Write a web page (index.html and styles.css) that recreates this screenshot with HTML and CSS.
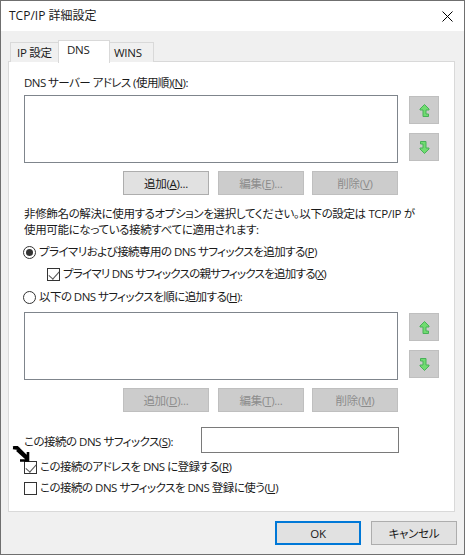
FILE: index.html
```html
<!DOCTYPE html>
<html lang="ja">
<head>
    <meta charset="UTF-8">
    <meta name="viewport" content="width=device-width, initial-scale=1.0">
    <title>TCP/IP 詳細設定</title>
    <link rel="stylesheet" href="styles.css">
</head>
<body>
    <svg width="0" height="0" class="defs">
        <symbol id="arrow-up" viewBox="0 0 11 13">
            <path d="M5.5 .5 L10 5 V6 H7 V10 H9.5 V12.5 H4 V6 H1 V5 Z" fill="#70dc70" stroke="#48b058" stroke-width="1"/>
        </symbol>
    </svg>
    <div class="window">
        <div class="titlebar">
            <span class="title">TCP/IP 詳細設定</span>
            <svg class="close" width="11" height="11" viewBox="0 0 11 11"><path d="M.5 .5 L10.5 10.5 M10.5 .5 L.5 10.5" stroke="#000" stroke-width="1" fill="none"/></svg>
        </div>
        <div class="content">
            <div class="tabs">
                <div class="tab">IP 設定</div>
                <div class="tab active">DNS</div>
                <div class="tab">WINS</div>
            </div>
            <div class="panel">
                <div class="label label-top">DNS サーバー アドレス (使用順)(<u>N</u>):</div>
                <div class="list-row">
                    <div class="listbox"></div>
                    <div class="arrows">
                        <div class="arrow-btn"><svg width="11" height="13"><use href="#arrow-up"/></svg></div>
                        <div class="arrow-btn"><svg class="flip" width="11" height="13"><use href="#arrow-up"/></svg></div>
                    </div>
                </div>
                <div class="btn-row">
                    <button class="btn">追加(<u>A</u>)...</button>
                    <button class="btn disabled">編集(<u>E</u>)...</button>
                    <button class="btn disabled">削除(<u>V</u>)</button>
                </div>
                <div class="desc">
                    非修飾名の解決に使用するオプションを選択してください。以下の設定は TCP/IP が<br>
                    使用可能になっている接続すべてに適用されます:
                </div>
                <div class="option radio-first"><span class="radio on"></span>プライマリおよび接続専用の DNS サフィックスを追加する(<u>P</u>)</div>
                <div class="option sub"><span class="check on"></span>プライマリ DNS サフィックスの親サフィックスを追加する(<u>X</u>)</div>
                <div class="option radio-second"><span class="radio"></span>以下の DNS サフィックスを順に追加する(<u>H</u>):</div>
                <div class="list-row list-second">
                    <div class="listbox"></div>
                    <div class="arrows">
                        <div class="arrow-btn"><svg width="11" height="13"><use href="#arrow-up"/></svg></div>
                        <div class="arrow-btn"><svg class="flip" width="11" height="13"><use href="#arrow-up"/></svg></div>
                    </div>
                </div>
                <div class="btn-row">
                    <button class="btn disabled">追加(<u>D</u>)...</button>
                    <button class="btn disabled">編集(<u>T</u>)...</button>
                    <button class="btn disabled">削除(<u>M</u>)</button>
                </div>
                <div class="suffix-row">
                    <span class="suffix-label">この接続の DNS サフィックス(<u>S</u>):</span>
                    <div class="suffix-input"></div>
                </div>
                <div class="option register"><span class="check on"></span>この接続のアドレスを DNS に登録する(<u>R</u>)</div>
                <div class="option use-suffix"><span class="check"></span>この接続の DNS サフィックスを DNS 登録に使う(<u>U</u>)</div>
                <!-- hand drawn arrow on top of the screenshot -->
                <svg class="scribble" width="18" height="16" viewBox="0 0 18 16">
                    <path d="M1 1.5 L5 1 L15.5 11.5 M1 2 L8 3 M16 6 L16 14.5 L8 14.5 M16 14 L5 4" stroke="#000" stroke-width="2.6" fill="none"/>
                </svg>
            </div>
            <div class="footer">
                <button class="btn default">OK</button>
                <button class="btn">キャンセル</button>
            </div>
        </div>
    </div>
</body>
</html>
```

FILE: styles.css
```css
* {
    box-sizing: border-box;
}

html, body {
    margin: 0;
    padding: 0;
    background-color: #f0f0f0;
}

body {
    font-family: "Open Sans", "Noto Sans CJK JP", sans-serif;
    font-size: 11.5px;
    line-height: 16px;
    letter-spacing: -0.25px;
    font-feature-settings: "palt";
    color: #1a1a1a;
    overflow: hidden;
    white-space: nowrap;
}

.defs {
    position: absolute;
}

.window {
    width: 465px;
    height: 555px;
    border: 1px solid #6f6f6f;
    background-color: #f0f0f0;
    display: flex;
    flex-direction: column;
}

.titlebar {
    height: 30px;
    flex: none;
    background-color: #fff;
    display: flex;
    align-items: center;
    justify-content: space-between;
    padding: 0 11px 0 8px;
}

.title {
    font-size: 12px;
    letter-spacing: 0;
}

.content {
    flex: 1;
    padding: 10px 9px 0 7px;
    display: flex;
    flex-direction: column;
}

.tabs {
    display: flex;
    height: 20px;
    padding-left: 2px;
    position: relative;
    z-index: 1;
}

.tab {
    height: 20px;
    margin-top: 1px;
    padding: 0 0 0 6px;
    line-height: 19px;
    background-color: #f0f0f0;
    border: 1px solid #d9d9d9;
    border-bottom: none;
    margin-right: -1px;
}

.tab:first-child {
    width: 49px;
}

.tab:last-child {
    width: 45px;
    padding-left: 4px;
}

.tab.active {
    width: 52px;
    height: 23px;
    margin-top: -1px;
    padding: 0 8px;
    line-height: 18px;
    background-color: #fff;
    position: relative;
    z-index: 2;
}

.panel {
    height: 451px;
    background-color: #fff;
    border: 1px solid #d9d9d9;
    padding: 0 15px;
    position: relative;
}

.label-top {
    height: 33px;
    line-height: 19px;
    padding-top: 11px;
    letter-spacing: -0.55px;
}

.list-row {
    display: flex;
    gap: 11px;
}

.listbox {
    width: 375px;
    height: 68px;
    background-color: #fff;
    border: 1px solid #7f858c;
}

.arrows {
    display: flex;
    flex-direction: column;
    gap: 9px;
    padding-top: 1px;
}

.arrow-btn {
    width: 30px;
    height: 28px;
    background-color: #ccc;
    border: 1px solid #bfbfbf;
    display: flex;
    align-items: center;
    justify-content: center;
}

.flip {
    transform: rotate(180deg);
}

.btn-row {
    display: flex;
    gap: 9px;
    margin-top: 8px;
    padding-left: 99px;
}

.btn {
    width: 86px;
    height: 24px;
    padding: 0;
    font-family: inherit;
    font-size: inherit;
    letter-spacing: inherit;
    font-feature-settings: inherit;
    color: #1a1a1a;
    background-color: #e1e1e1;
    border: 1px solid #adadad;
}

.btn-row .btn:last-child {
    margin-left: -1px;
}

.btn.disabled {
    color: #8c8c8c;
    background-color: #ccc;
    border-color: #bfbfbf;
}

.btn.default {
    border: 2px solid #0078d7;
}

.desc {
    margin-top: 11px;
    line-height: 16px;
    letter-spacing: -0.36px;
}

.option {
    display: flex;
    align-items: center;
    height: 18px;
    letter-spacing: -0.55px;
}

.radio, .check {
    flex: none;
    width: 13px;
    height: 13px;
    margin-right: 3px;
    border: 1px solid #333;
    background-color: #fff;
    position: relative;
}

.radio {
    border-radius: 50%;
}

.radio.on::after {
    content: "";
    position: absolute;
    left: 2px;
    top: 2px;
    width: 7px;
    height: 7px;
    border-radius: 50%;
    background-color: #333;
}

.check.on::after {
    content: "";
    position: absolute;
    left: 3px;
    top: 0;
    width: 5px;
    height: 9px;
    border: solid #555;
    border-width: 0 1.5px 1.5px 0;
    transform: rotate(42deg);
}

.radio-first {
    margin-top: 5px;
    margin-left: -1px;
}

.sub {
    margin-top: 4px;
    margin-left: 23px;
    letter-spacing: -0.75px;
}

.radio-second {
    margin-top: 5px;
    margin-left: -1px;
}

.list-second {
    margin-top: 6px;
}

.suffix-row {
    display: flex;
    align-items: center;
    justify-content: space-between;
    width: 375px;
    margin-top: 15px;
}

.suffix-label {
    position: relative;
    top: 2px;
    letter-spacing: -0.5px;
}

.suffix-input {
    width: 198px;
    height: 26px;
    background-color: #fff;
    border: 1px solid #7a7a7a;
}

.register {
    margin-top: 5px;
}

.use-suffix {
    margin-top: 3px;
    letter-spacing: -0.5px;
}

.scribble {
    position: absolute;
    left: 3px;
    top: 384px;
}

.footer {
    display: flex;
    justify-content: flex-end;
    gap: 10px;
    margin-top: 9px;
    margin-right: -2px;
}
```
